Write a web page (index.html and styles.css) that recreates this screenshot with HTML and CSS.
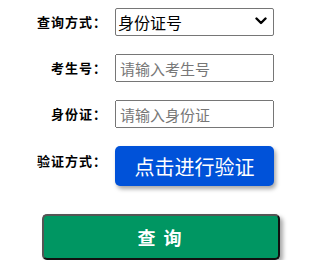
FILE: index.html
```html
<!DOCTYPE html>
<html lang="zh-CN">
<head>
<meta charset="utf-8">
<link rel="stylesheet" href="styles.css">
</head>
<body>
<form class="query-form">
  <div class="row">
    <label class="label">查询方式：</label>
    <div class="select-wrap">
      <select class="control select">
        <option>身份证号</option>
      </select>
      <svg class="chevron" width="12" height="8" viewBox="0 0 12 8" aria-hidden="true">
        <path d="M1.5 1.5 L6 6 L10.5 1.5" fill="none" stroke="#000" stroke-width="2.4" stroke-linecap="round" stroke-linejoin="round"/>
      </svg>
    </div>
  </div>
  <div class="row">
    <label class="label">考生号：</label>
    <input class="control input" type="text" placeholder="请输入考生号">
  </div>
  <div class="row">
    <label class="label">身份证：</label>
    <input class="control input" type="text" placeholder="请输入身份证">
  </div>
  <div class="row row-verify">
    <label class="label">验证方式：</label>
    <button type="button" class="verify-btn">点击进行验证</button>
  </div>
  <div class="submit-row">
    <button type="button" class="submit-btn">查 询</button>
  </div>
</form>
</body>
</html>
```

FILE: styles.css
```css
html, body {
  margin: 0;
  padding: 0;
  background: #fff;
}
body {
  font-family: "Noto Sans CJK SC", "Noto Sans", sans-serif;
  color: #000;
}
.query-form {
  display: flex;
  flex-direction: column;
  padding-top: 8px;
}
.row {
  display: flex;
  align-items: center;
  margin-bottom: 18px;
}
.label {
  width: 107px;
  text-align: right;
  font-size: 13px;
  font-weight: bold;
  letter-spacing: 1px;
  margin-right: 8px;
  line-height: 16px;
}
.control {
  box-sizing: border-box;
  width: 159px;
  height: 28px;
  margin: 0;
  font-family: "Noto Sans CJK SC", "Noto Sans", sans-serif;
  font-size: 15px;
}
.select-wrap {
  position: relative;
  width: 159px;
  height: 28px;
}
.select {
  -webkit-appearance: none;
  appearance: none;
  font-size: 16px;
  padding: 0 20px 0 2px;
  border: 1px solid #767676;
  border-radius: 2px;
  background: #fff;
  color: #000;
}
.chevron {
  position: absolute;
  left: 140px;
  top: 9px;
  pointer-events: none;
}
.input {
  padding: 0 3px;
}
.input::placeholder {
  color: #777;
}
.row-verify {
  align-items: flex-start;
  margin-bottom: 28px;
}
.row-verify .label {
  margin-top: 7px;
}
.verify-btn {
  width: 159px;
  height: 40px;
  margin: 0;
  border: none;
  border-radius: 5px;
  background: #0052d9;
  color: #fff;
  font-family: "Noto Sans CJK SC", "Noto Sans", sans-serif;
  font-size: 20px;
  box-shadow: 2px 3px 4px rgba(0, 0, 0, 0.35);
  padding: 0;
}
.submit-row {
  display: flex;
  justify-content: center;
}
.submit-btn {
  box-sizing: border-box;
  width: 238px;
  height: 46px;
  margin-left: 1px;
  border: 2px solid;
  border-color: #555 #111 #111 #555;
  border-radius: 5px;
  background: #009662;
  color: #fff;
  font-family: "Noto Sans CJK SC", "Noto Sans", sans-serif;
  font-size: 18px;
  font-weight: bold;
  letter-spacing: 2px;
  box-shadow: 3px 3px 4px rgba(0, 0, 0, 0.35);
  padding: 0;
}
```
